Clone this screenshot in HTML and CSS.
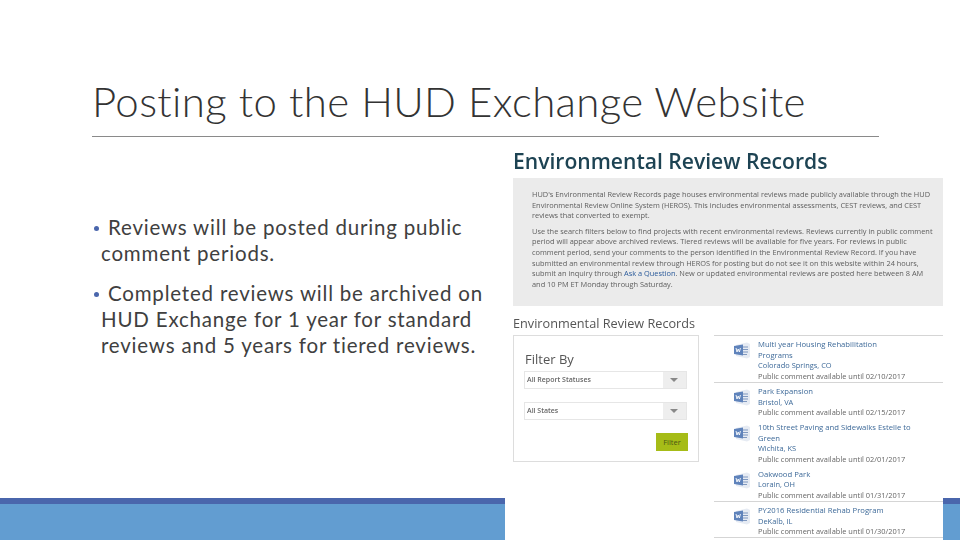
FILE: index.html
```html
<!DOCTYPE html>
<html lang="en">
<head>
<meta charset="utf-8">
<title>Posting to the HUD Exchange Website</title>
<link rel="stylesheet" href="styles.css">
</head>
<body>
<div class="slide">
  <header class="head">
    <h1 class="title">Posting to the HUD Exchange Website</h1>
  </header>
  <main class="body">
    <ul class="points">
      <li>Reviews will be posted during public comment periods.</li>
      <li>Completed reviews will be archived on HUD Exchange for 1 year for standard reviews and 5 years for tiered reviews.</li>
    </ul>
  </main>
  <footer class="foot"></footer>

  <section class="shot">
    <h2 class="shot-title">Environmental Review Records</h2>
    <div class="intro">
      <p>HUD's Environmental Review Records page houses environmental reviews made publicly available through the HUD Environmental Review Online System (HEROS). This includes environmental assessments, CEST reviews, and CEST reviews that converted to exempt.</p>
      <p>Use the search filters below to find projects with recent environmental reviews. Reviews currently in public comment period will appear above archived reviews. Tiered reviews will be available for five years. For reviews in public comment period, send your comments to the person identified in the Environmental Review Record. If you have submitted an environmental review through HEROS for posting but do not see it on this website within 24 hours, submit an inquiry through <a class="link">Ask a Question</a>. New or updated environmental reviews are posted here between 8 AM and 10 PM ET Monday through Saturday.</p>
    </div>
    <div class="lower">
      <div class="left">
        <h3 class="sub">Environmental Review Records</h3>
        <div class="card">
          <div class="filter-by">Filter By</div>
          <div class="select"><span class="sel-text">All Report Statuses</span><span class="arrow"></span></div>
          <div class="select"><span class="sel-text">All States</span><span class="arrow"></span></div>
          <div class="btn-row"><span class="btn">Filter</span></div>
        </div>
      </div>
      <div class="list">
        <div class="row">
          <svg class="doc" viewBox="0 0 18 18"><path d="M3 4 L14 1.5 L17 3 V16 L14 17.5 L3 15 Z" fill="#e6ebf3"/><path d="M1 5 L10 3.5 V14.5 L1 13 Z" fill="#5f83bb"/><path d="M10 6h5M10 8.5h5M10 11h5M10 13.500h4" stroke="#7f98bf" stroke-width="1.200"/><path d="M3 7l1 4 1.200-3 1.200 3 1-4" fill="none" stroke="#fff" stroke-width=".9"/></svg>
          <div class="info"><div class="name">Multi year Housing Rehabilitation Programs</div><div class="place">Colorado Springs, CO</div><div class="note">Public comment available until 02/10/2017</div></div>
        </div>
        <div class="row">
          <svg class="doc" viewBox="0 0 18 18"><path d="M3 4 L14 1.5 L17 3 V16 L14 17.5 L3 15 Z" fill="#e6ebf3"/><path d="M1 5 L10 3.5 V14.5 L1 13 Z" fill="#5f83bb"/><path d="M10 6h5M10 8.5h5M10 11h5M10 13.500h4" stroke="#7f98bf" stroke-width="1.200"/><path d="M3 7l1 4 1.200-3 1.200 3 1-4" fill="none" stroke="#fff" stroke-width=".9"/></svg>
          <div class="info"><div class="name">Park Expansion</div><div class="place">Bristol, VA</div><div class="note">Public comment available until 02/15/2017</div></div>
        </div>
        <div class="row">
          <svg class="doc" viewBox="0 0 18 18"><path d="M3 4 L14 1.5 L17 3 V16 L14 17.5 L3 15 Z" fill="#e6ebf3"/><path d="M1 5 L10 3.5 V14.5 L1 13 Z" fill="#5f83bb"/><path d="M10 6h5M10 8.5h5M10 11h5M10 13.500h4" stroke="#7f98bf" stroke-width="1.200"/><path d="M3 7l1 4 1.200-3 1.200 3 1-4" fill="none" stroke="#fff" stroke-width=".9"/></svg>
          <div class="info"><div class="name">10th Street Paving and Sidewalks Estelle to Green</div><div class="place">Wichita, KS</div><div class="note">Public comment available until 02/01/2017</div></div>
        </div>
        <div class="row">
          <svg class="doc" viewBox="0 0 18 18"><path d="M3 4 L14 1.5 L17 3 V16 L14 17.5 L3 15 Z" fill="#e6ebf3"/><path d="M1 5 L10 3.5 V14.5 L1 13 Z" fill="#5f83bb"/><path d="M10 6h5M10 8.5h5M10 11h5M10 13.500h4" stroke="#7f98bf" stroke-width="1.200"/><path d="M3 7l1 4 1.200-3 1.200 3 1-4" fill="none" stroke="#fff" stroke-width=".9"/></svg>
          <div class="info"><div class="name">Oakwood Park</div><div class="place">Lorain, OH</div><div class="note">Public comment available until 01/31/2017</div></div>
        </div>
        <div class="row">
          <svg class="doc" viewBox="0 0 18 18"><path d="M3 4 L14 1.5 L17 3 V16 L14 17.5 L3 15 Z" fill="#e6ebf3"/><path d="M1 5 L10 3.5 V14.5 L1 13 Z" fill="#5f83bb"/><path d="M10 6h5M10 8.5h5M10 11h5M10 13.500h4" stroke="#7f98bf" stroke-width="1.200"/><path d="M3 7l1 4 1.200-3 1.200 3 1-4" fill="none" stroke="#fff" stroke-width=".9"/></svg>
          <div class="info"><div class="name">PY2016 Residential Rehab Program</div><div class="place">DeKalb, IL</div><div class="note">Public comment available until 01/30/2017</div></div>
        </div>
      </div>
    </div>
  </section>
</div>
</body>
</html>
```
FILE: styles.css
```css
* { box-sizing: border-box; }
html, body { margin: 0; padding: 0; }
body { background: #fff; font-family: "Lato", "Liberation Sans", sans-serif; }
.slide {
  position: relative;
  width: 960px;
  height: 540px;
  overflow: hidden;
  display: flex;
  flex-direction: column;
  background: #fff;
}
.head { padding: 75px 81px 0 92px; }
.title {
  margin: 0;
  height: 62px;
  border-bottom: 1px solid #8a8a8a;
  font-weight: 300;
  font-size: 42px;
  line-height: 52px;
  letter-spacing: 0.35px;
  color: #333;
  white-space: nowrap;
}
.body { flex: 1; padding: 77px 0 0 93px; }
.points {
  list-style: none;
  margin: 0;
  padding: 0;
  width: 400px;
  font-size: 20.500px;
  line-height: 26px;
  letter-spacing: 0.8px;
  color: #404040;
}
.points li {
  padding-left: 8px;
  margin-bottom: 14px;
}
.points li::before {
  content: "";
  display: inline-block;
  width: 5px;
  height: 5px;
  border-radius: 50%;
  background: #4a66ac;
  margin-left: -7px;
  margin-right: 9px;
  vertical-align: 4px;
}
.foot {
  height: 42px;
  background: #629dd1;
  border-top: 6px solid #4a66ac;
}
.shot {
  position: absolute;
  left: 505px;
  top: 144px;
  width: 438px;
  height: 396px;
  overflow: hidden;
  background: #fff;
  padding: 4px 0 0 8px;
  font-family: "Open Sans", "Liberation Sans", sans-serif;
}
.shot-title {
  margin: 0;
  height: 30px;
  font-weight: 600;
  font-size: 21.100px;
  line-height: 25px;
  color: #1d4353;
  filter: blur(0.3px);
}
.intro {
  width: 430px;
  height: 128px;
  background: #ebebeb;
  padding: 11px 7px 0 19px;
  font-size: 7.400px;
  line-height: 10.600px;
  color: #5e5e5e;
}
.intro p { margin: 0 0 5px; filter: blur(0.4px); }
.link { color: #2a5a9a; }
.lower { display: flex; }
.left { width: 201px; }
.sub {
  margin: 0;
  height: 29px;
  padding-top: 9px;
  font-weight: 400;
  font-size: 12.700px;
  line-height: 17px;
  color: #555;
  white-space: nowrap;
  filter: blur(0.3px);
}
.card {
  width: 186px;
  height: 127px;
  border: 1px solid #ddd;
  padding: 13px 11px 0 10px;
}
.filter-by {
  font-size: 13px;
  line-height: 20px;
  height: 22px;
  padding-left: 1px;
  color: #555;
  filter: blur(0.3px);
}
.select {
  display: flex;
  justify-content: space-between;
  height: 18px;
  margin-bottom: 13px;
  border: 1px solid #e6e6e6;
  background: #fff;
}
.sel-text {
  padding-left: 2px;
  font-size: 7px;
  font-weight: 600;
  line-height: 16px;
  color: #666;
  filter: blur(0.35px);
}
.arrow {
  position: relative;
  width: 23px;
  background: #eee;
}
.arrow::after {
  content: "";
  position: absolute;
  left: 7px;
  top: 6px;
  border-left: 4px solid transparent;
  border-right: 4px solid transparent;
  border-top: 4px solid #888;
}
.btn-row { display: flex; justify-content: flex-end; margin-right: -1px; }
.btn {
  width: 32px;
  height: 18px;
  background: #a6bc17;
  font-size: 7.500px;
  line-height: 18px;
  text-align: center;
  color: #4a5614;
}
.list {
  width: 229px;
  margin-top: 29px;
  border-top: 1px solid #d5d5d5;
}
.row {
  display: flex;
  padding: 3px 0 0 19px;
  border-bottom: 1px solid #d5d5d5;
}
.row:nth-child(2), .row:nth-child(3) { border-bottom-color: transparent; }
.doc { width: 18px; height: 18px; flex: none; margin: 2px 7px 0 0; filter: blur(0.35px); }
.info {
  font-size: 7.450px;
  line-height: 10.700px;
  width: 155px;
  filter: blur(0.4px);
}
.name { font-size: 7.700px; }
.name, .place { color: #3e6a99; }
.note { color: #666; white-space: nowrap; }
```
